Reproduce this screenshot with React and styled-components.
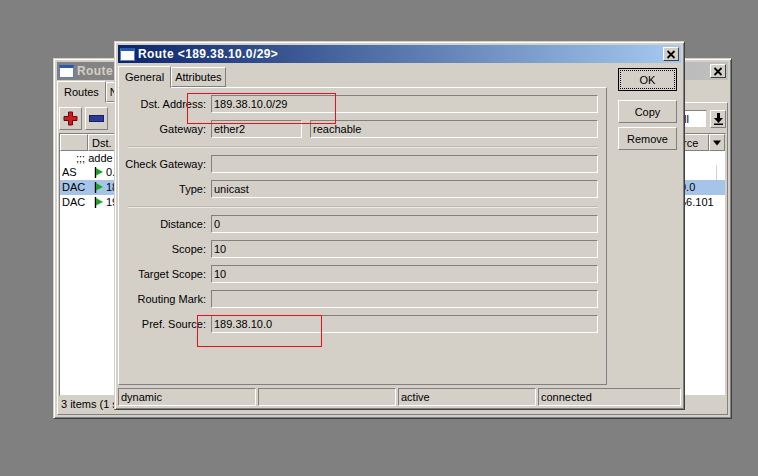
import React from "react"
import styled, { createGlobalStyle } from "styled-components"

const Global = createGlobalStyle`
  html, body { margin: 0; padding: 0; background: #808080; }
  body { width: 758px; height: 476px; overflow: hidden; font-family: "Liberation Sans", Arial, sans-serif; font-size: 11px; color: #000; }
  * { box-sizing: border-box; }
`

const Desktop = styled.div`
  position: relative;
  width: 758px;
  height: 476px;
  background: #808080;
  overflow: hidden;
`

const Frame = styled.div`
  position: absolute;
  isolation: isolate;
  left: ${(p) => p.$x}px;
  top: ${(p) => p.$y}px;
  width: ${(p) => p.$w}px;
  height: ${(p) => p.$h}px;
  background: #d4d0c8;
  border: 1px solid;
  border-color: #d4d0c8 #404040 #404040 #d4d0c8;
  box-shadow: inset 1px 1px 0 #fff, inset -1px -1px 0 #808080;
  padding: 3px;
  display: flex;
  flex-direction: column;
`

const TitleBar = styled.div`
  height: 18px;
  flex: none;
  display: flex;
  align-items: center;
  padding: 0 2px;
  gap: 3px;
  background: ${(p) =>
    p.$active
      ? "linear-gradient(90deg, #0a246a, #a6caf0)"
      : "linear-gradient(90deg, #808080, #c0c0c0)"};
  color: ${(p) => (p.$active ? "#fff" : "#d4d0c8")};
  font-weight: bold;
  font-size: 12px;
`

const TitleIcon = styled.span`
  width: 15px;
  height: 13px;
  flex: none;
  background: #fff;
  border: 1px solid #5a7fc0;
  border-top: 3px solid #2a5ab0;
`

const TitleText = styled.span`
  flex: 1;
  white-space: nowrap;
  overflow: hidden;
  letter-spacing: 0.4px;
`

const CloseButton = styled.button`
  width: 16px;
  height: 14px;
  padding: 0;
  flex: none;
  display: flex;
  align-items: center;
  justify-content: center;
  background: #d4d0c8;
  border: 1px solid;
  border-color: #fff #404040 #404040 #fff;
`

const CloseIcon = () => (
  <svg width="10" height="9" viewBox="0 0 10 9">
    <path d="M1.5 1 L8.5 8 M8.5 1 L1.5 8" stroke="#000" strokeWidth="1.8" />
  </svg>
)

const DialogBody = styled.div`
  flex: 1;
  min-height: 0;
  display: flex;
  padding-top: 2px;
`

const LeftColumn = styled.div`
  width: 489px;
  flex: none;
  display: flex;
  flex-direction: column;
`

const TabRow = styled.div`
  display: flex;
  align-items: flex-end;
  height: 22px;
  flex: none;
  position: relative;
  z-index: 1;
`

const Tab = styled.div`
  height: ${(p) => (p.$active ? 22 : 20)}px;
  margin-bottom: ${(p) => (p.$active ? -1 : 0)}px;
  padding: 0 ${(p) => p.$pad || 3}px;
  display: flex;
  align-items: center;
  background: #d4d0c8;
  border: 1px solid;
  border-color: #fff #808080 ${(p) => (p.$active ? "#d4d0c8" : "#808080")} #fff;
  white-space: nowrap;
`

const Panel = styled.div`
  height: 298px;
  flex: none;
  border: 1px solid;
  border-color: #fff #808080 #808080 #fff;
  padding: 7px 8px 0 0;
  display: flex;
  flex-direction: column;
  gap: 7px;
`

const Row = styled.div`
  display: flex;
  align-items: center;
  height: 18px;
  flex: none;
`

const Label = styled.label`
  width: 87px;
  flex: none;
  text-align: right;
  margin-right: 5px;
  white-space: nowrap;
`

const Field = styled.div`
  flex: ${(p) => (p.$w ? "none" : 1)};
  width: ${(p) => (p.$w ? `${p.$w}px` : "auto")};
  margin-left: ${(p) => p.$ml || 0}px;
  height: 18px;
  padding-left: 2px;
  line-height: 17px;
  white-space: nowrap;
  background: #d4d0c8;
  border: 1px solid;
  border-color: #808080 #fff #fff #808080;
`

const Separator = styled.div`
  height: 2px;
  flex: none;
  margin: 1px 0 0 9px;
  border-top: 1px solid #bdb9b1;
  border-bottom: 1px solid #ece9e2;
`

const ButtonColumn = styled.div`
  flex: 1;
  display: flex;
  flex-direction: column;
  padding: 3px 0 0 11px;
  gap: 4px;
`

const DialogButton = styled.button`
  width: 59px;
  height: 23px;
  flex: none;
  padding: 0;
  margin-bottom: ${(p) => p.$mb || 0}px;
  font: inherit;
  color: #000;
  background: #d4d0c8;
  border: 1px solid;
  border-color: ${(p) => (p.$primary ? "#000" : "#fff #808080 #808080 #fff")};
  outline: ${(p) => (p.$primary ? "1px dotted #000" : "none")};
  outline-offset: -3px;
`

const StatusBar = styled.div`
  height: 19px;
  flex: none;
  display: flex;
  align-items: flex-end;
  gap: 2px;
`

const StatusCell = styled.div`
  flex: ${(p) => (p.$grow ? 1 : "none")};
  width: ${(p) => (p.$grow ? "auto" : "138px")};
  height: 18px;
  padding-left: 2px;
  line-height: 17px;
  border: 1px solid;
  border-color: #808080 #fff #fff #808080;
  white-space: nowrap;
  overflow: hidden;
`

const ListBody = styled.div`
  flex: 1;
  min-height: 0;
  display: flex;
  flex-direction: column;
`

const ListPanel = styled.div`
  flex: 1;
  min-height: 0;
  display: flex;
  flex-direction: column;
  padding: 0 1px;
  border: 1px solid;
  border-color: #fff #808080 #808080 #fff;
`

const ListToolbar = styled.div`
  height: 30px;
  flex: none;
  display: flex;
  align-items: center;
  gap: 3px;
  padding-top: 1px;
`

const ToolButton = styled.button`
  width: ${(p) => (p.$small ? 16 : 23)}px;
  height: ${(p) => (p.$small ? 18 : 23)}px;
  padding: 0;
  flex: none;
  display: flex;
  align-items: center;
  justify-content: center;
  background: #d4d0c8;
  border: 1px solid;
  border-color: #fff #808080 #808080 #fff;
`

const ToolSpacer = styled.div`
  flex: 1;
`

const FindInput = styled.div`
  width: 32px;
  height: 18px;
  padding-left: 2px;
  line-height: 17px;
  background: #fff;
  border: 1px solid;
  border-color: #808080 #d4d0c8 #d4d0c8 #808080;
`

const Table = styled.div`
  flex: 1;
  min-height: 0;
  display: flex;
  flex-direction: column;
  background: #fff;
  border: 1px solid;
  border-color: #808080 #d4d0c8 #d4d0c8 #808080;
  overflow: hidden;
`

const HeaderRow = styled.div`
  height: 17px;
  flex: none;
  display: flex;
  background: #d4d0c8;
`

const HeaderCell = styled.div`
  flex: ${(p) => (p.$w ? "none" : 1)};
  width: ${(p) => (p.$w ? `${p.$w}px` : "auto")};
  padding: 0 3px;
  display: flex;
  align-items: center;
  justify-content: ${(p) => (p.$center ? "center" : "flex-start")};
  border: 1px solid;
  border-color: #fff #808080 #808080 #fff;
  white-space: nowrap;
  overflow: hidden;
`

const DataRow = styled.div`
  height: ${(p) => p.$h || 15}px;
  flex: none;
  display: flex;
  line-height: 15px;
  background: ${(p) => (p.$selected ? "#a6c4e8" : "#fff")};
`

const Cell = styled.div`
  flex: ${(p) => (p.$w ? "none" : 1)};
  width: ${(p) => (p.$w ? `${p.$w}px` : "auto")};
  padding-left: ${(p) => p.$pl || 2}px;
  display: flex;
  align-items: center;
  gap: 2px;
  white-space: nowrap;
  border-left: ${(p) => (p.$line ? "1px solid #d4d0c8" : "none")};
`

const CommentRow = styled(DataRow)`
  padding-left: 16px;
`

const ListStatus = styled.div`
  height: 18px;
  flex: none;
  padding-left: 2px;
  line-height: 17px;
  white-space: nowrap;
`

const Annotation = styled.div`
  position: absolute;
  left: ${(p) => p.$x}px;
  top: ${(p) => p.$y}px;
  width: ${(p) => p.$w}px;
  height: ${(p) => p.$h}px;
  border: 1px solid #e8101c;
`

const Flag = () => (
  <svg width="10" height="11" viewBox="0 0 10 11">
    <path d="M1.5 0 V11" stroke="#000" strokeWidth="1.4" />
    <path d="M2 1 L9 5 L2 8.5 Z" fill="#1fa02a" />
  </svg>
)

const Plus = () => (
  <svg width="15" height="15" viewBox="0 0 15 15">
    <path d="M5.5 1 H9.5 V5.5 H14 V9.5 H9.5 V14 H5.5 V9.5 H1 V5.5 H5.5 Z" fill="#d81820" stroke="#5a1010" strokeWidth="1" />
  </svg>
)

const Minus = () => (
  <svg width="15" height="7" viewBox="0 0 15 7">
    <rect x="0.5" y="0.5" width="14" height="6" fill="#2a3a98" stroke="#182060" />
  </svg>
)

const Down = () => (
  <svg width="10" height="6" viewBox="0 0 10 6">
    <path d="M0 0 H10 L5 6 Z" fill="#000" />
  </svg>
)

const FindDown = () => (
  <svg width="9" height="12" viewBox="0 0 9 12">
    <path d="M3 0 H6 V5 H9 L4.5 10 L0 5 H3 Z M0 10.5 H9 V12 H0 Z" fill="#000" />
  </svg>
)

const RouteListWindow = () => (
  <Frame $x={53} $y={58} $w={679} $h={361}>
    <TitleBar>
      <TitleIcon />
      <TitleText>Route</TitleText>
      <CloseButton>
        <CloseIcon />
      </CloseButton>
    </TitleBar>
    <ListBody>
      <TabRow>
        <Tab $active $pad={6}>Routes</Tab>
        <Tab>N</Tab>
      </TabRow>
      <ListPanel>
        <ListToolbar>
          <ToolButton>
            <Plus />
          </ToolButton>
          <ToolButton>
            <Minus />
          </ToolButton>
          <ToolSpacer />
          <FindInput>all</FindInput>
          <ToolButton $small>
            <FindDown />
          </ToolButton>
        </ListToolbar>
        <Table>
          <HeaderRow>
            <HeaderCell $w={28} />
            <HeaderCell $w={591}>Dst. A</HeaderCell>
            <HeaderCell>rce</HeaderCell>
            <HeaderCell $w={16} $center>
              <Down />
            </HeaderCell>
          </HeaderRow>
          <CommentRow $h={14}>;;; adde</CommentRow>
          <DataRow>
            <Cell $w={28}>AS</Cell>
            <Cell $w={628} $pl={6}>
              <Flag />
              0.
            </Cell>
            <Cell $line />
          </DataRow>
          <DataRow $selected>
            <Cell $w={28}>DAC</Cell>
            <Cell $w={590} $pl={6}>
              <Flag />
              18
            </Cell>
            <Cell>0.0</Cell>
          </DataRow>
          <DataRow>
            <Cell $w={28}>DAC</Cell>
            <Cell $w={590} $pl={6}>
              <Flag />
              19
            </Cell>
            <Cell>56.101</Cell>
          </DataRow>
        </Table>
        <ListStatus>3 items (1 s</ListStatus>
      </ListPanel>
    </ListBody>
  </Frame>
)

const RouteDialog = () => (
  <Frame $x={114} $y={41} $w={571} $h={369}>
    <TitleBar $active>
      <TitleIcon />
      <TitleText>Route &lt;189.38.10.0/29&gt;</TitleText>
      <CloseButton>
        <CloseIcon />
      </CloseButton>
    </TitleBar>
    <DialogBody>
      <LeftColumn>
        <TabRow>
          <Tab $active $pad={6}>General</Tab>
          <Tab>Attributes</Tab>
        </TabRow>
        <Panel>
          <Row>
            <Label>Dst. Address:</Label>
            <Field>189.38.10.0/29</Field>
          </Row>
          <Row>
            <Label>Gateway:</Label>
            <Field $w={91}>ether2</Field>
            <Field $ml={8}>reachable</Field>
          </Row>
          <Separator />
          <Row>
            <Label>Check Gateway:</Label>
            <Field />
          </Row>
          <Row>
            <Label>Type:</Label>
            <Field>unicast</Field>
          </Row>
          <Separator />
          <Row>
            <Label>Distance:</Label>
            <Field>0</Field>
          </Row>
          <Row>
            <Label>Scope:</Label>
            <Field>10</Field>
          </Row>
          <Row>
            <Label>Target Scope:</Label>
            <Field>10</Field>
          </Row>
          <Row>
            <Label>Routing Mark:</Label>
            <Field />
          </Row>
          <Row>
            <Label>Pref. Source:</Label>
            <Field>189.38.10.0</Field>
          </Row>
        </Panel>
      </LeftColumn>
      <ButtonColumn>
        <DialogButton $primary $mb={5}>OK</DialogButton>
        <DialogButton>Copy</DialogButton>
        <DialogButton>Remove</DialogButton>
      </ButtonColumn>
    </DialogBody>
    <StatusBar>
      <StatusCell>dynamic</StatusCell>
      <StatusCell />
      <StatusCell>active</StatusCell>
      <StatusCell $grow>connected</StatusCell>
    </StatusBar>
  </Frame>
)

export default function App() {
  return (
    <Desktop>
      <Global />
      <RouteListWindow />
      <RouteDialog />
      <Annotation $x={187} $y={93} $w={149} $h={31} />
      <Annotation $x={197} $y={315} $w={125} $h={32} />
    </Desktop>
  )
}
